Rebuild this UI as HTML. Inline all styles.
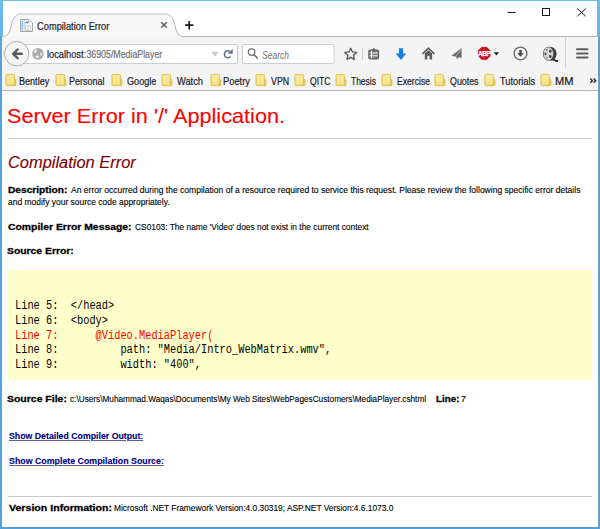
<!DOCTYPE html>
<html><head><meta charset="utf-8"><title>Compilation Error</title>
<style>
html,body{margin:0;padding:0;}
body{width:600px;height:529px;overflow:hidden;position:relative;background:linear-gradient(#6cbbec,#62b3e7 37px,#50a4dc 37px,#4ea2db);font-family:'Liberation Sans', sans-serif;color:#000;}
.win{position:absolute;left:3px;top:1px;width:594px;height:36px;background:#fff;}
.win2{position:absolute;left:2px;top:37px;width:596px;height:490px;background:#fff;}
.bot{position:absolute;left:1px;top:527px;width:598px;height:1px;background:#5f96c2;}
.t{position:absolute;white-space:pre;}
.ui{-webkit-text-stroke:0.2px currentColor;}
.ct{-webkit-text-stroke:0.12px currentColor;}
.bd{-webkit-text-stroke:0.28px currentColor;}
.code{font-family:'Liberation Mono', monospace;transform-origin:0 0;}
.a{position:absolute;}
.hr{position:absolute;left:8px;width:584px;height:1px;background:#c9c9c9;}
.yellow{position:absolute;left:8px;top:270px;width:584px;height:110px;background:#ffffcc;}
</style></head><body>

<div class="win"></div><div class="win2"></div><div class="bot"></div><div class="a" style="left:1px;top:37px;width:1px;height:491px;background:#6f9fc6"></div><div class="a" style="left:598px;top:37px;width:1px;height:491px;background:#6f9fc6"></div>
<svg class="a" style="left:0;top:0" width="600" height="92" viewBox="0 0 600 92">
 <rect x="2" y="36.5" width="596" height="54" fill="#f4f4f4"/>
 <path d="M1.5 36.5 C8 36.5 9.5 33 11 27 C12.5 19.5 14.5 14 21 14 H165 C171.5 14 173.8 19.5 175.3 27 C176.8 33 178.5 36.5 184.5 36.5 Z" fill="#f8f8f8"/>
 <path d="M1.5 36.5 C8 36.5 9.5 33 11 27 C12.5 19.5 14.5 14 21 14 H165 C171.5 14 173.8 19.5 175.3 27 C176.8 33 178.5 36.5 184.5 36.5 H598" fill="none" stroke="#adb3bb" stroke-width="1"/>
 <path d="M16.5 15.2 C18 14.2 19.5 13.8 21 13.8 H165 C166.5 13.8 168 14.2 169.5 15.2" fill="none" stroke="#dcdee2" stroke-width="1.4"/>
 <rect x="2" y="90" width="596" height="1" fill="#b2b2b2"/>
 <!-- favicon -->
 <path d="M20.5 19.5 H29 L32.5 23 V31.5 H20.5 Z" fill="#fff" stroke="#a4a4a4" stroke-width="1"/>
 <rect x="21.6" y="20.6" width="1.5" height="10" fill="#7fbcec"/>
 <rect x="23.8" y="20" width="0.8" height="11.2" fill="#c4c4c4"/>
 <path d="M25.3 23.2 l1.2 -1.3 l1.1 0.9 l1.6 -1.5" stroke="#2f86d2" stroke-width="1.1" fill="none"/>
 <path d="M25.5 25.5 H31 V30.5 H25.5 Z M27.8 25.5 V30.5" fill="#f2f4f6" stroke="#c2c6cc" stroke-width="0.7"/>
 <!-- tab close -->
 <path d="M161.2 22.2 L166.8 27.8 M166.8 22.2 L161.2 27.8" stroke="#5f6670" stroke-width="1.6"/>
 <!-- new tab plus -->
 <path d="M189.2 21 V29.4 M185 25.2 H193.4" stroke="#1a1a1a" stroke-width="1.7"/>
 <!-- window controls -->
 <rect x="507.5" y="12" width="8" height="1" fill="#1a1a1a"/>
 <rect x="542.5" y="8.5" width="7" height="7" fill="none" stroke="#1a1a1a" stroke-width="1"/>
 <path d="M577.3 8.6 L585.8 16.3 M585.8 8.6 L577.3 16.3" stroke="#1a1a1a" stroke-width="1"/>
 <!-- url bar -->
 <rect x="20.5" y="44.5" width="217" height="19" rx="1.5" fill="#fff" stroke="#c8ced6" stroke-width="1"/>
 <!-- back button -->
 <circle cx="16.7" cy="53.7" r="12.2" fill="#f4f4f4" stroke="#ababab" stroke-width="1"/>
 <path d="M21.8 53.8 H13.6 M17.6 49.5 L13.1 53.8 L17.6 58.1" stroke="#5b5b5b" stroke-width="2.4" fill="none" stroke-linecap="round" stroke-linejoin="round"/>
 <!-- globe -->
 <circle cx="38" cy="53.9" r="5.8" fill="#a9a9a9"/>
 <ellipse cx="35.6" cy="51.2" rx="1.3" ry="1.9" transform="rotate(40 35.6 51.2)" fill="#f0f0f0"/>
 <ellipse cx="41.3" cy="54.2" rx="1" ry="1.6" fill="#ececec"/>
 <ellipse cx="37.3" cy="56.7" rx="1.8" ry="1.2" fill="#f2f2f2"/>
 <!-- dropdown triangle -->
 <path d="M211.2 51.8 H218.8 L215 56.8 Z" fill="#c3cbd4"/>
 <!-- reload -->
 <path d="M230.58 56.45 A3.5 3.5 0 1 1 230.15 51.52" stroke="#5d7186" stroke-width="1.5" fill="none"/>
 <path d="M232.7 48.7 V53.7 H227.9 Z" fill="#5d7186"/>
 <!-- search box -->
 <rect x="242.5" y="44.5" width="91.5" height="19" rx="1.5" fill="#fff" stroke="#c8ced6" stroke-width="1"/>
 <circle cx="251.6" cy="52.1" r="3.25" fill="none" stroke="#6e6e6e" stroke-width="1.3"/>
 <path d="M254 54.6 L257.4 58" stroke="#6e6e6e" stroke-width="1.5" stroke-linecap="round"/>
 <!-- star -->
 <path d="M350.7 48.3 L352.4 51.9 L356.6 52.4 L353.5 55.2 L354.3 59.4 L350.7 57.3 L347.1 59.4 L347.9 55.2 L344.8 52.4 L349 51.9 Z" fill="none" stroke="#5a5a5a" stroke-width="1.4" stroke-linejoin="round"/>
 <rect x="362" y="47.5" width="1" height="12.5" fill="#c7ced6"/>
 <!-- reading list clipboard -->
 <rect x="368.9" y="50.2" width="9.6" height="8.6" rx="1.4" fill="#7a7a7a" stroke="#5c5c5c" stroke-width="1.3"/>
 <path d="M371.9 50 L373.7 47.8 L375.5 50 Z" fill="#5c5c5c"/>
 <path d="M369.5 53 H378 M369.5 55.8 H378 M371.5 50.8 V58.3" stroke="#fafafa" stroke-width="1"/>
 <!-- download arrow blue -->
 <path d="M398.9 48.3 H403.1 V53.4 H406.3 L401 60 L395.6 53.4 H398.9 Z" fill="#1b7fe6"/>
 <!-- home -->
 <path d="M422.5 53.8 L428.4 48.2 L434.4 53.8" stroke="#5d5d5d" stroke-width="1.6" fill="none"/>
 <path d="M424.8 53.3 L428.4 50.2 L432.1 53.3 V59.6 H429.6 V55.8 H427.3 V59.6 H424.8 Z" fill="#5d5d5d"/>
 <!-- paper plane -->
 <path d="M461.6 48 L451.3 55.9 L455.6 56.4 L457.2 59.6 L458.5 57.3 L461.6 57.7 Z" fill="#6a6a6a"/>
 <path d="M461.2 49 L455.8 56.3 L457.2 59" stroke="#d0d0d0" stroke-width="0.7" fill="none"/>
 <!-- ABP -->
 <path d="M481.6 46.6 H486.9 L490.9 50.6 V56.1 L486.9 60.2 H481.6 L477.6 56.1 V50.6 Z" fill="#c8101e" stroke="#fff" stroke-width="0.8"/>
 <text x="484.2" y="56.1" font-family="'Liberation Sans', sans-serif" font-weight="bold" font-size="6.6" fill="#fff" text-anchor="middle" letter-spacing="-0.45" stroke="#fff" stroke-width="0.25">ABP</text>
 <path d="M493.8 52.2 H499 L496.4 55.4 Z" fill="#222"/>
 <!-- download circle -->
 <circle cx="520.5" cy="53.5" r="6.4" fill="none" stroke="#6d6d6d" stroke-width="1.4"/>
 <path d="M519.2 50 H521.8 V53.2 H523.8 L520.5 56.8 L517.2 53.2 H519.2 Z" fill="#4f4f4f"/>
 <!-- film reel -->
 <ellipse cx="551" cy="53.8" rx="5.6" ry="6.9" fill="#3c3c3c"/>
 <path d="M553 59.5 L556.5 61 H558" stroke="#2a2a2a" stroke-width="1.8" fill="none"/>
 <ellipse cx="548.4" cy="53.7" rx="5.1" ry="6.7" fill="#d9d9d9" stroke="#6a6a6a" stroke-width="0.9"/>
 <ellipse cx="550.3" cy="51.2" rx="1.3" ry="1.6" fill="#444"/>
 <ellipse cx="550.3" cy="56.3" rx="1.3" ry="1.6" fill="#444"/>
 <ellipse cx="545.5" cy="53.8" rx="1.1" ry="1.5" fill="#505050"/>
 <ellipse cx="546.8" cy="49.8" rx="1" ry="1.1" fill="#8a8a8a"/>
 <ellipse cx="547" cy="57.8" rx="1" ry="1.1" fill="#9a9a9a"/>
 <rect x="565" y="37.5" width="1" height="31" fill="#c9d0d8"/>
 <!-- hamburger -->
 <path d="M577 49.3 H587.5 M577 53.5 H587.5 M577 57.6 H587.5" stroke="#5c5c5c" stroke-width="2" stroke-linecap="round"/>
 <!-- chevron -->
 <path d="M590.3 78.6 L592.4 80.7 L590.3 82.8 M593.6 78.6 L595.7 80.7 L593.6 82.8" stroke="#2a2a2a" stroke-width="1.4" fill="none"/>
</svg>
<svg width="0" height="0" style="position:absolute"><defs><linearGradient id="fg" x1="0" y1="0" x2="0" y2="1"><stop offset="0" stop-color="#f7e78e"/><stop offset="1" stop-color="#efd462"/></linearGradient></defs></svg><svg class="a" style="left:4.5px;top:73px" width="14" height="15" viewBox="0 0 14 15"><path d="M8.8 6.3 H10 Q11 6.3 11 7.3 V11.8 Q11 12.7 10 12.7 H8.8 Z" fill="#eed66a" stroke="#d6bb48" stroke-width="0.8"/><rect x="0.9" y="1.4" width="8.7" height="11.3" rx="1.1" fill="url(#fg)" stroke="#d8bd4c" stroke-width="0.8"/><rect x="2" y="2.5" width="6.5" height="9.1" fill="#faefb0" opacity="0.5"/></svg><svg class="a" style="left:55.0px;top:73px" width="14" height="15" viewBox="0 0 14 15"><path d="M8.8 6.3 H10 Q11 6.3 11 7.3 V11.8 Q11 12.7 10 12.7 H8.8 Z" fill="#eed66a" stroke="#d6bb48" stroke-width="0.8"/><rect x="0.9" y="1.4" width="8.7" height="11.3" rx="1.1" fill="url(#fg)" stroke="#d8bd4c" stroke-width="0.8"/><rect x="2" y="2.5" width="6.5" height="9.1" fill="#faefb0" opacity="0.5"/></svg><svg class="a" style="left:110.5px;top:73px" width="14" height="15" viewBox="0 0 14 15"><path d="M8.8 6.3 H10 Q11 6.3 11 7.3 V11.8 Q11 12.7 10 12.7 H8.8 Z" fill="#eed66a" stroke="#d6bb48" stroke-width="0.8"/><rect x="0.9" y="1.4" width="8.7" height="11.3" rx="1.1" fill="url(#fg)" stroke="#d8bd4c" stroke-width="0.8"/><rect x="2" y="2.5" width="6.5" height="9.1" fill="#faefb0" opacity="0.5"/></svg><svg class="a" style="left:161.2px;top:73px" width="14" height="15" viewBox="0 0 14 15"><path d="M8.8 6.3 H10 Q11 6.3 11 7.3 V11.8 Q11 12.7 10 12.7 H8.8 Z" fill="#eed66a" stroke="#d6bb48" stroke-width="0.8"/><rect x="0.9" y="1.4" width="8.7" height="11.3" rx="1.1" fill="url(#fg)" stroke="#d8bd4c" stroke-width="0.8"/><rect x="2" y="2.5" width="6.5" height="9.1" fill="#faefb0" opacity="0.5"/></svg><svg class="a" style="left:209.5px;top:73px" width="14" height="15" viewBox="0 0 14 15"><path d="M8.8 6.3 H10 Q11 6.3 11 7.3 V11.8 Q11 12.7 10 12.7 H8.8 Z" fill="#eed66a" stroke="#d6bb48" stroke-width="0.8"/><rect x="0.9" y="1.4" width="8.7" height="11.3" rx="1.1" fill="url(#fg)" stroke="#d8bd4c" stroke-width="0.8"/><rect x="2" y="2.5" width="6.5" height="9.1" fill="#faefb0" opacity="0.5"/></svg><svg class="a" style="left:255.0px;top:73px" width="14" height="15" viewBox="0 0 14 15"><path d="M8.8 6.3 H10 Q11 6.3 11 7.3 V11.8 Q11 12.7 10 12.7 H8.8 Z" fill="#eed66a" stroke="#d6bb48" stroke-width="0.8"/><rect x="0.9" y="1.4" width="8.7" height="11.3" rx="1.1" fill="url(#fg)" stroke="#d8bd4c" stroke-width="0.8"/><rect x="2" y="2.5" width="6.5" height="9.1" fill="#faefb0" opacity="0.5"/></svg><svg class="a" style="left:294.2px;top:73px" width="14" height="15" viewBox="0 0 14 15"><path d="M8.8 6.3 H10 Q11 6.3 11 7.3 V11.8 Q11 12.7 10 12.7 H8.8 Z" fill="#eed66a" stroke="#d6bb48" stroke-width="0.8"/><rect x="0.9" y="1.4" width="8.7" height="11.3" rx="1.1" fill="url(#fg)" stroke="#d8bd4c" stroke-width="0.8"/><rect x="2" y="2.5" width="6.5" height="9.1" fill="#faefb0" opacity="0.5"/></svg><svg class="a" style="left:334.8px;top:73px" width="14" height="15" viewBox="0 0 14 15"><path d="M8.8 6.3 H10 Q11 6.3 11 7.3 V11.8 Q11 12.7 10 12.7 H8.8 Z" fill="#eed66a" stroke="#d6bb48" stroke-width="0.8"/><rect x="0.9" y="1.4" width="8.7" height="11.3" rx="1.1" fill="url(#fg)" stroke="#d8bd4c" stroke-width="0.8"/><rect x="2" y="2.5" width="6.5" height="9.1" fill="#faefb0" opacity="0.5"/></svg><svg class="a" style="left:381.2px;top:73px" width="14" height="15" viewBox="0 0 14 15"><path d="M8.8 6.3 H10 Q11 6.3 11 7.3 V11.8 Q11 12.7 10 12.7 H8.8 Z" fill="#eed66a" stroke="#d6bb48" stroke-width="0.8"/><rect x="0.9" y="1.4" width="8.7" height="11.3" rx="1.1" fill="url(#fg)" stroke="#d8bd4c" stroke-width="0.8"/><rect x="2" y="2.5" width="6.5" height="9.1" fill="#faefb0" opacity="0.5"/></svg><svg class="a" style="left:434.2px;top:73px" width="14" height="15" viewBox="0 0 14 15"><path d="M8.8 6.3 H10 Q11 6.3 11 7.3 V11.8 Q11 12.7 10 12.7 H8.8 Z" fill="#eed66a" stroke="#d6bb48" stroke-width="0.8"/><rect x="0.9" y="1.4" width="8.7" height="11.3" rx="1.1" fill="url(#fg)" stroke="#d8bd4c" stroke-width="0.8"/><rect x="2" y="2.5" width="6.5" height="9.1" fill="#faefb0" opacity="0.5"/></svg><svg class="a" style="left:483.5px;top:73px" width="14" height="15" viewBox="0 0 14 15"><path d="M8.8 6.3 H10 Q11 6.3 11 7.3 V11.8 Q11 12.7 10 12.7 H8.8 Z" fill="#eed66a" stroke="#d6bb48" stroke-width="0.8"/><rect x="0.9" y="1.4" width="8.7" height="11.3" rx="1.1" fill="url(#fg)" stroke="#d8bd4c" stroke-width="0.8"/><rect x="2" y="2.5" width="6.5" height="9.1" fill="#faefb0" opacity="0.5"/></svg><svg class="a" style="left:540.0px;top:73px" width="14" height="15" viewBox="0 0 14 15"><path d="M8.8 6.3 H10 Q11 6.3 11 7.3 V11.8 Q11 12.7 10 12.7 H8.8 Z" fill="#eed66a" stroke="#d6bb48" stroke-width="0.8"/><rect x="0.9" y="1.4" width="8.7" height="11.3" rx="1.1" fill="url(#fg)" stroke="#d8bd4c" stroke-width="0.8"/><rect x="2" y="2.5" width="6.5" height="9.1" fill="#faefb0" opacity="0.5"/></svg>
<div class="hr" style="top:138px"></div>
<div class="yellow"></div>
<div class="hr" style="top:496px"></div>

<div class="t ui" id="tab" style="left:36.90px;top:20.70px;font-size:10.5px;line-height:10.5px;letter-spacing:0.000px;color:#1b1b1b;transform:scaleX(0.8853);transform-origin:0 0;">Compilation Error</div>
<div class="t ui" id="url1" style="left:47.36px;top:50.03px;font-size:10.3px;line-height:10.3px;letter-spacing:0.000px;color:#1a1a2a;transform:scaleX(0.8998);transform-origin:0 0;">localhost</div>
<div class="t ui" id="url2" style="left:84.20px;top:50.03px;font-size:10.3px;line-height:10.3px;letter-spacing:0.000px;color:#6f6f6f;transform:scaleX(0.8542);transform-origin:0 0;">:36905/MediaPlayer</div>
<div class="t" id="search" style="left:262.15px;top:51.00px;font-size:10.3px;line-height:10.3px;letter-spacing:0.000px;color:#727272;font-style:italic;transform:scaleX(0.8262);transform-origin:0 0;">Search</div>
<div class="t ui" id="bm0" style="left:19.46px;top:75.54px;font-size:10.5px;line-height:10.5px;letter-spacing:0.000px;color:#1b1b1b;transform:scaleX(0.8627);transform-origin:0 0;">Bentley</div>
<div class="t ui" id="bm1" style="left:69.46px;top:75.54px;font-size:10.5px;line-height:10.5px;letter-spacing:0.000px;color:#1b1b1b;transform:scaleX(0.8589);transform-origin:0 0;">Personal</div>
<div class="t ui" id="bm2" style="left:126.54px;top:75.54px;font-size:10.5px;line-height:10.5px;letter-spacing:0.000px;color:#1b1b1b;transform:scaleX(0.8665);transform-origin:0 0;">Google</div>
<div class="t ui" id="bm3" style="left:176.54px;top:75.54px;font-size:10.5px;line-height:10.5px;letter-spacing:0.000px;color:#1b1b1b;transform:scaleX(0.8833);transform-origin:0 0;">Watch</div>
<div class="t ui" id="bm4" style="left:223.24px;top:75.54px;font-size:10.5px;line-height:10.5px;letter-spacing:0.000px;color:#1b1b1b;transform:scaleX(0.8857);transform-origin:0 0;">Poetry</div>
<div class="t ui" id="bm5" style="left:270.96px;top:75.54px;font-size:10.5px;line-height:10.5px;letter-spacing:0.000px;color:#1b1b1b;transform:scaleX(0.8402);transform-origin:0 0;">VPN</div>
<div class="t ui" id="bm6" style="left:309.50px;top:75.54px;font-size:10.5px;line-height:10.5px;letter-spacing:0.000px;color:#1b1b1b;transform:scaleX(0.8176);transform-origin:0 0;">QITC</div>
<div class="t ui" id="bm7" style="left:350.86px;top:75.54px;font-size:10.5px;line-height:10.5px;letter-spacing:0.000px;color:#1b1b1b;transform:scaleX(0.8048);transform-origin:0 0;">Thesis</div>
<div class="t ui" id="bm8" style="left:396.70px;top:75.54px;font-size:10.5px;line-height:10.5px;letter-spacing:0.000px;color:#1b1b1b;transform:scaleX(0.8211);transform-origin:0 0;">Exercise</div>
<div class="t ui" id="bm9" style="left:449.54px;top:75.54px;font-size:10.5px;line-height:10.5px;letter-spacing:0.000px;color:#1b1b1b;transform:scaleX(0.8432);transform-origin:0 0;">Quotes</div>
<div class="t ui" id="bm10" style="left:500.00px;top:75.54px;font-size:10.5px;line-height:10.5px;letter-spacing:0.000px;color:#1b1b1b;transform:scaleX(0.8802);transform-origin:0 0;">Tutorials</div>
<div class="t ui" id="bm11" style="left:555.20px;top:75.54px;font-size:10.5px;line-height:10.5px;letter-spacing:0.000px;color:#1b1b1b;transform:scaleX(1.0500);transform-origin:0 0;">MM</div>
<div class="t ct" id="h1" style="left:7.16px;top:105.95px;font-size:20.7px;line-height:20.7px;letter-spacing:0.000px;color:#ff0000;transform:scaleX(1.0473);transform-origin:0 0;">Server Error in '/' Application.</div>
<div class="t ct" id="h2" style="left:7.66px;top:154.54px;font-size:16px;line-height:16px;letter-spacing:0.000px;color:#800000;font-style:italic;transform:scaleX(1.0263);transform-origin:0 0;">Compilation Error</div>
<div class="t bd" id="desc" style="left:8.36px;top:184.96px;font-size:9.8px;line-height:9.8px;letter-spacing:0.000px;font-weight:bold;transform:scaleX(1.0379);transform-origin:0 0;">Description:</div>
<div class="t ct" id="desct" style="left:71.00px;top:185.62px;font-size:9px;line-height:9px;letter-spacing:0.000px;transform:scaleX(0.9482);transform-origin:0 0;">An error occurred during the compilation of a resource required to service this request. Please review the following specific error details</div>
<div class="t ct" id="desc2" style="left:8.00px;top:197.62px;font-size:9px;line-height:9px;letter-spacing:0.000px;transform:scaleX(0.9401);transform-origin:0 0;">and modify your source code appropriately.</div>
<div class="t bd" id="cem" style="left:8.00px;top:221.50px;font-size:9.8px;line-height:9.8px;letter-spacing:0.000px;font-weight:bold;transform:scaleX(1.0606);transform-origin:0 0;">Compiler Error Message:</div>
<div class="t ct" id="cemt" style="left:134.54px;top:223.16px;font-size:9px;line-height:9px;letter-spacing:0.000px;transform:scaleX(0.9300);transform-origin:0 0;">CS0103: The name 'Video' does not exist in the current context</div>
<div class="t bd" id="se" style="left:7.44px;top:245.70px;font-size:9.8px;line-height:9.8px;letter-spacing:0.000px;font-weight:bold;transform:scaleX(1.0577);transform-origin:0 0;">Source Error:</div>
<div class="t bd" id="sf" style="left:7.44px;top:393.50px;font-size:9.8px;line-height:9.8px;letter-spacing:0.000px;font-weight:bold;transform:scaleX(1.0676);transform-origin:0 0;">Source File:</div>
<div class="t ct" id="sft" style="left:70.00px;top:395.16px;font-size:9px;line-height:9px;letter-spacing:0.000px;transform:scaleX(0.9143);transform-origin:0 0;">c:\Users\Muhammad.Waqas\Documents\My Web Sites\WebPagesCustomers\MediaPlayer.cshtml</div>
<div class="t bd" id="line" style="left:436.16px;top:393.50px;font-size:9.8px;line-height:9.8px;letter-spacing:0.000px;font-weight:bold;transform:scaleX(0.9998);transform-origin:0 0;">Line:</div>
<div class="t ct" id="seven" style="left:460.66px;top:394.02px;font-size:9.4px;line-height:9.4px;letter-spacing:0.000px;">7</div>
<div class="t ct" id="l1" style="left:8.50px;top:432.13px;font-size:9.2px;line-height:9.2px;letter-spacing:0.000px;color:#000080;font-weight:bold;transform:scaleX(0.9528);transform-origin:0 0;text-decoration:underline;text-decoration-color:#5c5ca6;">Show Detailed Compiler Output:</div>
<div class="t ct" id="l2" style="left:8.50px;top:456.63px;font-size:9.2px;line-height:9.2px;letter-spacing:0.000px;color:#000080;font-weight:bold;transform:scaleX(0.9599);transform-origin:0 0;text-decoration:underline;text-decoration-color:#5c5ca6;">Show Complete Compilation Source:</div>
<div class="t bd" id="ver" style="left:8.50px;top:503.38px;font-size:9.8px;line-height:9.8px;letter-spacing:0.000px;font-weight:bold;transform:scaleX(1.0813);transform-origin:0 0;">Version Information:</div>
<div class="t ct" id="vert" style="left:113.70px;top:503.62px;font-size:9px;line-height:9px;letter-spacing:0.000px;transform:scaleX(0.9274);transform-origin:0 0;">Microsoft .NET Framework Version:4.0.30319; ASP.NET Version:4.6.1073.0</div>
<div class="t code" style="left:14.8px;top:299.6px;font-size:12px;line-height:12px;transform:scaleX(0.861);">Line 5:  &lt;/head&gt;</div>
<div class="t code" style="left:14.8px;top:314.6px;font-size:12px;line-height:12px;transform:scaleX(0.861);">Line 6:  &lt;body&gt;</div>
<div class="t code" style="left:14.8px;top:329.5px;font-size:12px;line-height:12px;transform:scaleX(0.861);color:#ff0000;">Line 7:      @Video.MediaPlayer(</div>
<div class="t code" style="left:14.8px;top:344.4px;font-size:12px;line-height:12px;transform:scaleX(0.861);">Line 8:          path: "Media/Intro_WebMatrix.wmv",</div>
<div class="t code" style="left:14.8px;top:359.3px;font-size:12px;line-height:12px;transform:scaleX(0.861);">Line 9:          width: "400",</div>
</body></html>
